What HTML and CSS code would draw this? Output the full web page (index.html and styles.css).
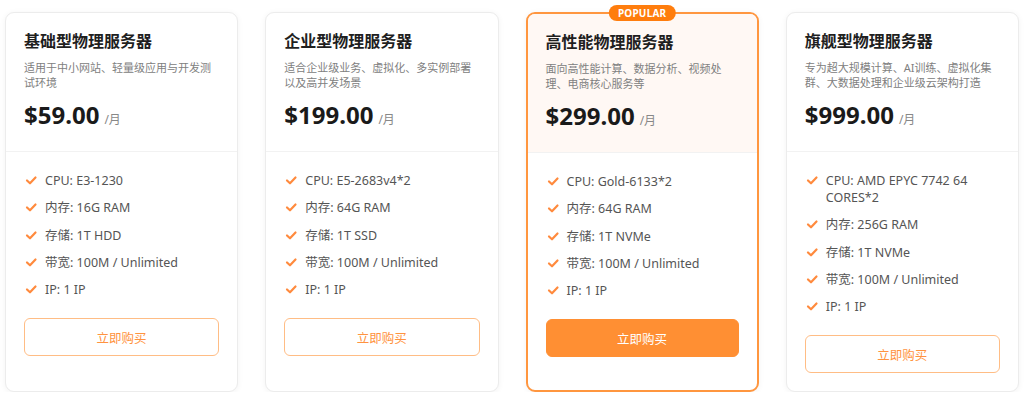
FILE: index.html
```html
<!DOCTYPE html>
<html lang="zh-CN">
<head>
    <meta charset="UTF-8">
    <meta name="viewport" content="width=device-width, initial-scale=1.0">
    <title>物理服务器价格</title>
    <link rel="stylesheet" href="styles.css">
</head>
<body>
    <div class="plans">
        <div class="plan">
            <div class="plan-head">
                <h3>基础型物理服务器</h3>
                <p class="desc">适用于中小网站、轻量级应用与开发测试环境</p>
                <div class="price">$59.00<span class="unit">/月</span></div>
            </div>
            <div class="plan-body">
                <ul class="features">
                    <li><svg class="check" viewBox="0 0 14 14"><polyline points="3,7.5 6,10.3 11.5,4.5"/></svg><span>CPU: E3-1230</span></li>
                    <li><svg class="check" viewBox="0 0 14 14"><polyline points="3,7.5 6,10.3 11.5,4.5"/></svg><span>内存: 16G RAM</span></li>
                    <li><svg class="check" viewBox="0 0 14 14"><polyline points="3,7.5 6,10.3 11.5,4.5"/></svg><span>存储: 1T HDD</span></li>
                    <li><svg class="check" viewBox="0 0 14 14"><polyline points="3,7.5 6,10.3 11.5,4.5"/></svg><span>带宽: 100M / Unlimited</span></li>
                    <li><svg class="check" viewBox="0 0 14 14"><polyline points="3,7.5 6,10.3 11.5,4.5"/></svg><span>IP: 1 IP</span></li>
                </ul>
                <button class="buy">立即购买</button>
            </div>
        </div>

        <div class="plan">
            <div class="plan-head">
                <h3>企业型物理服务器</h3>
                <p class="desc">适合企业级业务、虚拟化、多实例部署以及高并发场景</p>
                <div class="price">$199.00<span class="unit">/月</span></div>
            </div>
            <div class="plan-body">
                <ul class="features">
                    <li><svg class="check" viewBox="0 0 14 14"><polyline points="3,7.5 6,10.3 11.5,4.5"/></svg><span>CPU: E5-2683v4*2</span></li>
                    <li><svg class="check" viewBox="0 0 14 14"><polyline points="3,7.5 6,10.3 11.5,4.5"/></svg><span>内存: 64G RAM</span></li>
                    <li><svg class="check" viewBox="0 0 14 14"><polyline points="3,7.5 6,10.3 11.5,4.5"/></svg><span>存储: 1T SSD</span></li>
                    <li><svg class="check" viewBox="0 0 14 14"><polyline points="3,7.5 6,10.3 11.5,4.5"/></svg><span>带宽: 100M / Unlimited</span></li>
                    <li><svg class="check" viewBox="0 0 14 14"><polyline points="3,7.5 6,10.3 11.5,4.5"/></svg><span>IP: 1 IP</span></li>
                </ul>
                <button class="buy">立即购买</button>
            </div>
        </div>

        <div class="plan popular">
            <span class="badge">POPULAR</span>
            <div class="plan-head">
                <h3>高性能物理服务器</h3>
                <p class="desc">面向高性能计算、数据分析、视频处理、电商核心服务等</p>
                <div class="price">$299.00<span class="unit">/月</span></div>
            </div>
            <div class="plan-body">
                <ul class="features">
                    <li><svg class="check" viewBox="0 0 14 14"><polyline points="3,7.5 6,10.3 11.5,4.5"/></svg><span>CPU: Gold-6133*2</span></li>
                    <li><svg class="check" viewBox="0 0 14 14"><polyline points="3,7.5 6,10.3 11.5,4.5"/></svg><span>内存: 64G RAM</span></li>
                    <li><svg class="check" viewBox="0 0 14 14"><polyline points="3,7.5 6,10.3 11.5,4.5"/></svg><span>存储: 1T NVMe</span></li>
                    <li><svg class="check" viewBox="0 0 14 14"><polyline points="3,7.5 6,10.3 11.5,4.5"/></svg><span>带宽: 100M / Unlimited</span></li>
                    <li><svg class="check" viewBox="0 0 14 14"><polyline points="3,7.5 6,10.3 11.5,4.5"/></svg><span>IP: 1 IP</span></li>
                </ul>
                <button class="buy primary">立即购买</button>
            </div>
        </div>

        <div class="plan">
            <div class="plan-head">
                <h3>旗舰型物理服务器</h3>
                <p class="desc">专为超大规模计算、AI训练、虚拟化集群、大数据处理和企业级云架构打造</p>
                <div class="price">$999.00<span class="unit">/月</span></div>
            </div>
            <div class="plan-body">
                <ul class="features">
                    <li><svg class="check" viewBox="0 0 14 14"><polyline points="3,7.5 6,10.3 11.5,4.5"/></svg><span>CPU: AMD EPYC 7742 64 CORES*2</span></li>
                    <li><svg class="check" viewBox="0 0 14 14"><polyline points="3,7.5 6,10.3 11.5,4.5"/></svg><span>内存: 256G RAM</span></li>
                    <li><svg class="check" viewBox="0 0 14 14"><polyline points="3,7.5 6,10.3 11.5,4.5"/></svg><span>存储: 1T NVMe</span></li>
                    <li><svg class="check" viewBox="0 0 14 14"><polyline points="3,7.5 6,10.3 11.5,4.5"/></svg><span>带宽: 100M / Unlimited</span></li>
                    <li><svg class="check" viewBox="0 0 14 14"><polyline points="3,7.5 6,10.3 11.5,4.5"/></svg><span>IP: 1 IP</span></li>
                </ul>
                <button class="buy">立即购买</button>
            </div>
        </div>
    </div>
</body>
</html>
```

FILE: styles.css
```css
body {
    margin: 0;
    font-family: "Noto Sans", "Noto Sans CJK SC", sans-serif;
    background: #ffffff;
    color: #1a1a1a;
}
.plans {
    display: grid;
    grid-template-columns: repeat(4, 1fr);
    gap: 27px;
    padding: 12px 5px 0;
}
.plan {
    position: relative;
    background: white;
    border: 1px solid #ececec;
    border-radius: 9px;
    box-shadow: 0 1px 6px rgba(0,0,0,0.05);
}
.plan.popular {
    border: 2px solid #ff963f;
}
.plan-head {
    padding: 17px 18px 21px;
    border-bottom: 1px solid #f2f2f2;
    border-radius: 9px 9px 0 0;
}
.popular .plan-head {
    background-color: #fff8f4;
    border-radius: 7px 7px 0 0;
}
.plan-head h3 {
    margin: 0 0 8px;
    font-size: 16px;
    line-height: 22px;
    font-weight: 700;
    color: #1f1f1f;
}
.desc {
    margin: 0;
    font-size: 11px;
    line-height: 15px;
    color: #808080;
}
.price {
    display: flex;
    align-items: baseline;
    height: 30px;
    margin-top: 10px;
    font-size: 24px;
    line-height: 30px;
    font-weight: 700;
    color: #1a1a1a;
}
.unit {
    margin-left: 5px;
    font-size: 12px;
    line-height: 1;
    font-weight: 400;
    color: #888;
}
.badge {
    position: absolute;
    top: -9px;
    left: 50%;
    transform: translateX(-50%);
    padding: 0 9px;
    height: 16px;
    line-height: 16px;
    border-radius: 8px;
    background: #ff7d0d;
    color: white;
    font-size: 10px;
    font-weight: 700;
    letter-spacing: 0.2px;
}
.plan-body {
    padding: 20px 18px 18px;
}
.features {
    list-style: none;
    margin: 0 0 20px;
    padding: 0;
    display: flex;
    flex-direction: column;
    gap: 10.3px;
}
.features li {
    display: flex;
    gap: 7px;
    font-size: 12.5px;
    line-height: 17px;
    color: #555;
}
.check {
    flex: none;
    width: 14px;
    height: 14px;
    margin-top: 1px;
    fill: none;
    stroke: #ff8a3d;
    stroke-width: 2.2;
    stroke-linecap: round;
    stroke-linejoin: round;
}
.buy {
    display: block;
    width: 100%;
    height: 38px;
    border: 1px solid #ffbd85;
    border-radius: 6px;
    background: white;
    color: #ff9340;
    font-family: inherit;
    font-size: 12.5px;
    cursor: pointer;
}
.buy.primary {
    background-color: #ff8f33;
    border-color: #ff8f33;
    color: white;
}
```
